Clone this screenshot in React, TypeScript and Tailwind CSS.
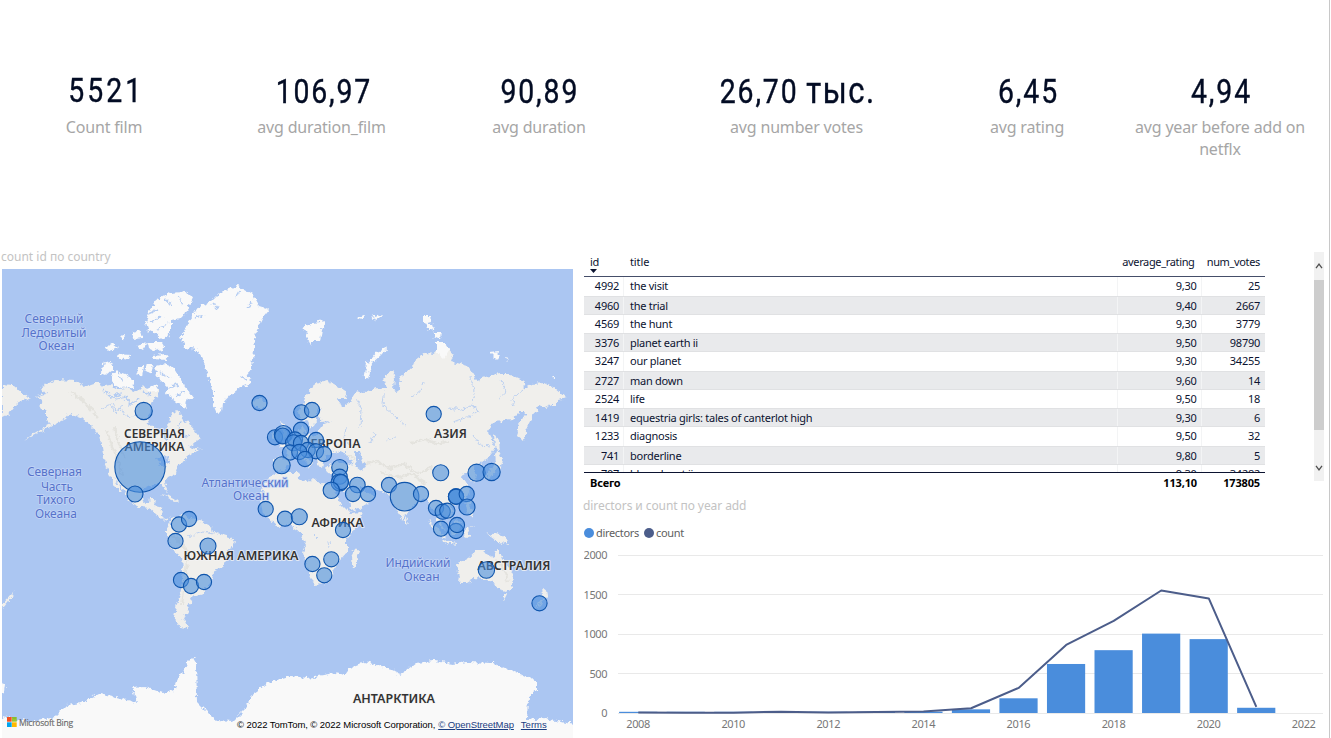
const kpis = [
  { value: '5521', label: 'Count film', box: 'w-[208px]', spacing: 'tracking-[3.6px]', shift: 'pt-0 pl-[4px]' },
  { value: '106,97', label: 'avg duration_film', box: 'w-[227px]', spacing: 'tracking-[2.1px]', shift: 'pt-px pl-[4px]' },
  { value: '90,89', label: 'avg duration', box: 'w-[208px]', spacing: 'tracking-[2.2px]', shift: 'pt-px pl-[2px]' },
  { value: '26,70', unit: 'тыс.', label: 'avg number votes', box: 'w-[307px]', spacing: 'tracking-[2.2px]', shift: 'pt-px pl-[2px]' },
  { value: '6,45', label: 'avg rating', box: 'w-[154px]', spacing: 'tracking-[2.2px]', shift: 'pt-px pl-[2px]' },
  { value: '4,94', label: 'avg year before add on netflx', box: 'ml-[20px] w-[192px]', spacing: 'tracking-[2.2px]', shift: 'pt-px pl-[2px]' },
];

const rows = [
  ['4992', 'the visit', '9,30', '25'],
  ['4960', 'the trial', '9,40', '2667'],
  ['4569', 'the hunt', '9,30', '3779'],
  ['3376', 'planet earth ii', '9,50', '98790'],
  ['3247', 'our planet', '9,30', '34255'],
  ['2727', 'man down', '9,60', '14'],
  ['2524', 'life', '9,50', '18'],
  ['1419', 'equestria girls: tales of canterlot high', '9,30', '6'],
  ['1233', 'diagnosis', '9,50', '32'],
  ['741', 'borderline', '9,80', '5'],
  ['707', 'blue planet ii', '9,30', '34282'],
];

const bubbles: number[][] = [
  [143.7, 411, 8.6], [140, 467, 25.2], [135, 494, 8], [259.5, 403], [179, 524.5], [189, 519], [175.5, 541], [208, 546, 8],
  [181, 580], [191, 586], [204, 582], [301.3, 412.3], [312, 410], [301, 429.7], [275, 437.3], [283.3, 434.5, 9],
  [282.7, 436, 8], [295, 439.5], [293.5, 442.7, 8], [301, 443], [316, 440], [307.7, 450], [316, 451.3], [324, 454], [290, 452.5],
  [299.3, 452], [305, 459], [281.7, 465.3, 8.5], [339.7, 467.5, 8], [339.7, 476.7], [339.6, 482.5, 8.5], [341, 482],
  [331.3, 490.3, 8.2], [357.4, 485, 7.8], [353, 494], [368, 494], [389, 485], [404.6, 496.7, 14.3], [421, 494],
  [433.7, 414], [440.7, 472.7, 8], [476.6, 472.7, 8.6], [491.6, 472, 8.6], [456, 496.5], [456, 496.5], [456, 496.7],
  [466.7, 494], [467, 507, 8], [436, 508], [442.7, 511.7], [447.3, 510.7], [441, 528.7], [456, 531], [457, 525],
  [265.7, 509], [285, 518.7], [299.3, 516.7, 8], [343, 530], [331.3, 559.3], [312.4, 564], [324.3, 575.3],
  [486.4, 570, 8.2], [539.5, 603.3],
];

const land = [
  // Alaska, Canada, USA, Central America
  'M42 400 37 396 46 394 41 387 55 380 75 381 85 387 97 383 104 386 110 385 118 389 125 388 137 392 143 386 150 389 157 386 160 391 156 397 151 403 150 413 146 418 148 424 156 428 163 433 165 441 169 438 167 428 170 422 172 412 177 411 182 415 185 423 189 421 193 429 201 439 193 444 188 447 196 449 201 448 192 454 187 457 183 462 178 467 176 473 168 477 164 483 168 492 164 489 161 484 152 484 144 488 142 496 143 503 149 502 150 498 155 498 154 506 162 508 161 515 165 519 171 518 163 521 157 515 149 508 140 507 130 502 124 491 118 482 113 474 120 487 122 493 115 486 109 473 103 458 102 445 100 435 90 425 82 418 70 413 66 418 58 422 50 427 40 432 24 441 36 432 51 424 46 419 46 412 40 408z',
  // South America
  'M171 518 182 515 197 520 212 527 213 532 230 537 234 543 227 553 223 567 213 572 212 582 203 593 197 595 190 598 192 603 187 607 189 613 183 617 188 628 180 627 174 618 177 603 181 590 183 570 182 557 173 550 167 538 167 529z',
  // Eurasia
  'M305 398 312 387 318 383 327 380 335 384 347 392 346 399 337 399 342 407 349 403 352 398 356 391 364 393 378 387 387 389 384 378 392 369 395 378 394 390 398 392 400 383 399 377 412 368 415 360 425 353 435 354 439 346 448 347 453 353 450 361 468 366 474 375 476 380 485 377 500 374 510 374 523 380 525 388 532 384 545 383 555 388 567 398 558 400 558 405 551 405 545 408 538 406 534 414 528 425 523 441 517 436 519 424 526 413 518 413 512 420 495 422 488 431 493 440 495 449 488 458 479 464 473 468 477 478 471 482 467 472 461 475 466 482 470 490 466 499 460 503 450 506 454 513 450 519 443 514 440 509 439 519 445 530 439 524 435 510 430 508 428 500 423 498 417 503 407 512 403 520 398 513 392 500 387 493 377 490 366 489 360 485 362 490 369 492 374 497 367 505 351 511 345 500 337 487 340 475 328 474 324 468 336 462 347 464 354 463 347 458 341 451 334 453 328 457 324 459 322 468 317 465 316 458 307 449 305 455 313 464 309 469 306 462 298 453 292 455 289 463 283 471 274 470 274 458 286 457 287 450 279 445 289 440 297 435 302 425 305 433 315 437 319 430 323 424 331 421 321 422 318 416 322 407 316 410 316 421 312 429 308 421 300 419 298 411 303 405z',
  // Africa
  'M273 475 290 472 298 472 299 478 307 482 313 479 320 484 333 485 340 503 350 513 363 512 358 524 347 540 347 552 336 565 332 577 325 584 315 585 308 570 303 553 306 545 298 530 290 525 277 526 263 513 260 500 265 483z',
  // Madagascar, Sri Lanka
  'M359 551 355 549 351 557 352 569 356 567z', 'M405 517 408 521 405 524z',
  // Southeast Asian islands, New Guinea
  'M428 519 434 525 446 537 443 539 434 531z', 'M443 540 458 543 458 545 444 543z', 'M449 526 457 519 462 524 458 534 451 534z',
  'M465 528 475 526 468 529 471 537 466 539 464 535z', 'M484 532 491 536 498 532 507 539 509 545 496 541z', 'M464 497 471 503 474 518 468 515z',
  // Australia, Tasmania, New Zealand
  'M456 565 468 558 477 550 486 550 485 554 493 559 497 548 502 559 513 573 512 586 506 592 497 589 493 582 487 580 475 578 467 583 459 583 460 577z',
  'M502 595 507 595 504 601z', 'M542 587 549 593 546 597 540 605 534 610 543 598z', 'M2 605 11 595 16 590 8 602 3 608z',
  // Japan, Sakhalin
  'M498 451 502 459 500 467 492 476 483 479 490 471 496 461 495 455z', 'M494 434 499 440 500 452 495 447z',
  // Britain, Ireland, Iceland
  'M279 421 285 425 288 437 279 440 283 433z', 'M273 432 279 432 277 439 271 439z', 'M252 402 258 398 267 401 264 408 255 408z',
  // Cuba and Hispaniola
  'M160 494 170 496 180 502 172 500z',
  // Far-east tip at the left edge
  'M2 384 13 385 22 393 31 397 23 401 17 404 10 413 2 417z',
];

const ice = [
  'M200 306 190 320 180 337 185 348 197 350 204 362 208 377 213 390 213 403 217 413 222 412 223 403 230 395 240 388 252 383 247 374 252 368 254 350 256 330 262 318 269 309 259 306 253 295 237 286 220 293 211 302z',
  'M145 320 150 309 157 300 170 293 182 292 194 297 190 306 181 318 171 320 171 330 165 340 155 334 148 330z',
  'M155 366 166 364 173 367 179 377 185 386 193 397 185 402 187 408 177 403 171 398 169 388 159 379z',
  'M111 377 116 371 125 374 133 380 134 387 120 388 113 384z', 'M102 363 109 361 114 368 106 375 101 373z',
  'M105 348 112 343 118 348 110 351z', 'M119 354 130 355 129 360 118 358z', 'M120 337 125 334 124 341z', 'M132 333 141 331 143 338 134 339z', 'M136 346 148 343 143 350z', 'M148 343 162 343 165 348 155 351 149 348z', 'M151 355 167 354 166 360 152 359z',
  'M138 366 144 366 142 377 137 373z', 'M147 364 152 364 150 374 145 371z', 'M147 388 156 384 158 390 149 393z', 'M165 390 171 390 170 397z',
  'M303 327 313 323 326 321 322 330 320 341 313 341 311 347 307 335z', 'M356 318 365 314 363 320z', 'M371 317 382 314 377 321z',
  'M364 380 367 364 377 352 388 347 381 355 372 363 368 379z', 'M424 315 430 315 431 322 424 324z', 'M426 324 433 324 434 330 428 331z', 'M434 332 441 332 440 339 434 336z',
  'M437 342 444 342 451 350 444 359 437 353z', 'M490 353 499 352 497 360z', 'M505 356 509 357 507 360z', 'M552 376 556 377 553 379z',
  'M2 717 33 722 55 717 67 705 81 703 100 693 123 699 137 703 133 688 145 687 163 693 175 690 178 677 183 672 187 663 193 657 196 662 197 702 208 713 217 720 233 721 247 707 253 693 267 683 290 676 308 678 335 673 345 675 350 668 365 662 382 667 395 670 398 676 415 663 435 661 452 664 468 662 492 663 518 673 537 682 537 690 528 697 527 720 545 718 560 722 576 724 576 742 -2 742z',
  'M0 682 5 684 4 692 0 694z',
];

const lakes = [
  'M326 457 331 453 337 455 345 453 348 458 341 459 330 462z', 'M354 451 359 451 360 457 365 466 362 471 356 466 358 460z',
  'M156 458 164 456 171 460 165 466 160 464z', 'M334 483 344 488 351 505 349 508 339 492z',
];

// Inlets and sounds that break up the arctic islands
const inlets =
  'M150 322 162 316M158 330 168 323M165 298 172 306M178 296 183 305M148 314 157 310M160 372 170 378M168 388 178 385M176 396 184 392M119 375 123 382M247 380 240 377M203 315 195 318M240 291 236 298M252 302 247 308M213 303 218 309M104 391 112 397 121 394M112 402 117 410M124 396 131 404 140 398M150 395 142 391M181 421 178 430M190 434 182 438';
const rivers =
  'M357 398 361 410 360 427M384 395 383 405 397 418 407 427M423 382 420 391 412 397M470 377 475 391 471 405 478 410 470 416 454 422M500 380 506 389 500 400M523 390 512 399 514 405M448 408 462 410 471 406 479 411M473 435 480 445 490 446M101 410 110 404 116 413 122 405M108 394 116 399 128 397M119 407 125 415 135 416M188 537 203 532 214 534M346 428 344 439 354 447M375 433 371 443M386 440 395 438M313 533 320 540M329 541 330 548';
const relief =
  'M360 465 375 461 390 468 404 464 419 474 433 466M380 472 397 477 412 474 425 483M107 430 112 446 118 460 122 476M114 428 119 445 126 458M173 535 187 551 186 577 182 605M345 456 355 458M411 443 425 439 437 444 449 441M496 560 505 570 508 582M70 392 83 400 98 417';

type MapLabel = { x: number; y: number; text: string; w?: number };
const oceans: MapLabel[] = [
  { x: 54, y: 323, text: 'Северный', w: 59 }, { x: 54, y: 336.5, text: 'Ледовитый', w: 65 }, { x: 56.5, y: 350, text: 'Океан', w: 36 },
  { x: 54.5, y: 476, text: 'Северная', w: 55 }, { x: 57, y: 490.5, text: 'Часть', w: 32 }, { x: 56, y: 504, text: 'Тихого', w: 39 }, { x: 56, y: 518, text: 'Океана', w: 42 },
  { x: 245, y: 487, text: 'Атлантический', w: 87 }, { x: 251, y: 500, text: 'Океан', w: 36 },
  { x: 418, y: 566.5, text: 'Индийский', w: 65 }, { x: 421.5, y: 580.5, text: 'Океан', w: 36 },
];
const continents: MapLabel[] = [
  { x: 154.5, y: 438, text: 'СЕВЕРНАЯ', w: 61 }, { x: 154.5, y: 451, text: 'АМЕРИКА', w: 60 }, { x: 241, y: 560, text: 'ЮЖНАЯ АМЕРИКА', w: 115 },
  { x: 335.5, y: 447.5, text: 'ЕВРОПА', w: 50 }, { x: 450.5, y: 437.5, text: 'АЗИЯ', w: 33 }, { x: 337.5, y: 527, text: 'АФРИКА', w: 52 },
  { x: 514, y: 570, text: 'АВСТРАЛИЯ', w: 73 }, { x: 394, y: 703, text: 'АНТАРКТИКА', w: 82 },
];

function WorldMap() {
  return (
    <svg className="block h-[469px] w-[571px]" viewBox="2 269 571 469">
      <defs>
        <filter id="coast" x="-5%" y="-5%" width="110%" height="110%">
          <feTurbulence type="fractalNoise" baseFrequency="0.22" numOctaves="3" seed="4" />
          <feDisplacementMap in="SourceGraphic" scale="6.5" xChannelSelector="R" yChannelSelector="G" />
          <feGaussianBlur stdDeviation="0.5" />
        </filter>
      </defs>
      <rect x="2" y="269" width="571" height="469" fill="#abc6f2" />
      <g filter="url(#coast)">
        {land.map((d) => <path key={d} d={d} fill="#f0efec" />)}
        <path d={relief} fill="none" stroke="#e4e3de" strokeWidth="2.2" />
        <path d={rivers} fill="none" stroke="#b7cdf0" strokeWidth="0.9" />
        {lakes.map((d) => <path key={d} d={d} fill="#abc6f2" />)}
        {ice.map((d) => <path key={d} d={d} fill="#f9f9f9" />)}
        <path d={inlets} fill="none" stroke="#b4ccf2" strokeWidth="1.4" />
      </g>
      <g fontFamily="'Noto Sans','Open Sans',sans-serif" textAnchor="middle">
        <g fontSize="12" fill="#5673cb" stroke="#c3d5f6" strokeWidth="1.6" strokeLinejoin="round" paintOrder="stroke">
          {oceans.map((l, i) => <text key={i} x={l.x} y={l.y} textLength={l.w}>{l.text}</text>)}
        </g>
        <g fontSize="12" fontWeight="600" fill="#333333" stroke="#f4f4f4" strokeOpacity="0.75" strokeWidth="1.8" strokeLinejoin="round" paintOrder="stroke">
          {continents.map((l, i) => <text key={i} x={l.x} y={l.y} textLength={l.w} lengthAdjust="spacingAndGlyphs">{l.text}</text>)}
        </g>
      </g>
      <g fill="#4a8ddc" fillOpacity="0.6" stroke="#0f55ac" strokeWidth="1.1">
        {bubbles.map(([x, y, r], i) => <circle key={i} cx={x} cy={y} r={r ?? 7.6} />)}
      </g>
      <path fill="#f25022" d="M7 717h4.7v4.7H7z" /><path fill="#7fba00" fillOpacity=".8" d="M12 717h4.7v4.7H12z" />
      <path fill="#00a4ef" d="M7 722.3h4.7v4.7H7z" /><path fill="#ffb900" d="M12 722.3h4.7v4.7H12z" />
      <text x="19" y="725.5" fontFamily="'Open Sans',sans-serif" fontSize="8.5" fill="#6b6b6b" stroke="#6b6b6b" strokeWidth="0.15" textLength="54">Microsoft Bing</text>
    </svg>
  );
}

const bars = [2, 2, 1, 8, 2, 8, 16, 45, 185, 620, 795, 1005, 935, 65];
const line = [3, 2, 2, 13, 3, 10, 15, 58, 315, 860, 1165, 1550, 1450, 75];
const chartX = (i: number) => 54.3 + i * 47.54;
const chartY = (v: number) => 163.3 - v * 0.0789;
const barTop = (v: number) => Math.min(chartY(v) - 0.4, 161.8);

function Chart() {
  return (
    <svg className="block h-[188px] w-[745px]" viewBox="0 0 745 188" fontFamily="'Noto Sans','Open Sans',sans-serif" fontSize="11" fill="#777777">
      {[0, 500, 1000, 1500, 2000].map((v) => (
        <g key={v}>
          <path d={`M34 ${Math.floor(chartY(v)) + 0.5}H739`} stroke="#e9e9e9" />
          <text x="23.5" y={chartY(v) + 3.8} textAnchor="end" textLength={v === 0 ? 6 : v === 500 ? 18 : 24}>{v}</text>
        </g>
      ))}
      {bars.map((v, i) => (
        <rect key={i} x={chartX(i) - 19.2} y={barTop(v)} width="38.2" height={163 - barTop(v)} fill="#4a8ddc" />
      ))}
      <polyline points={line.map((v, i) => `${chartX(i)},${chartY(v) - 0.5}`).join(' ')} fill="none" stroke="#4c5d8a" strokeWidth="2" strokeLinejoin="round" />
      {[2008, 2010, 2012, 2014, 2016, 2018, 2020, 2022].map((y, i) => (
        <text key={y} x={chartX(i * 2)} y="178.3" textAnchor="middle" textLength="24">{y}</text>
      ))}
    </svg>
  );
}

const cols = 'grid grid-cols-[40px_494px_84px_63px]';

export default function App() {
  return (
    <main className="flex h-[738px] w-[1330px] flex-col overflow-hidden border-r border-[#c8c8c8] bg-white font-['Noto_Sans','Open_Sans',sans-serif] text-[#0b1330]">
      <section className="flex h-[248px] pt-[72px]">
        {kpis.map((k) => (
          <div key={k.label} className={`${k.box} flex shrink-0 flex-col items-center`}>
            <div className={`h-[44px] ${k.shift}`}>
              <div className={`${k.spacing} scale-x-[0.86] whitespace-nowrap font-['Roboto',sans-serif] text-[33px] leading-[38px] text-[#030c24] [-webkit-text-stroke:0.4px_#030c24]`}>
                {k.value}
                {k.unit && <span className="ml-[9px] text-[36px] leading-[30px] tracking-[1.8px]">{k.unit}</span>}
              </div>
            </div>
            <div className="text-center text-[16px] leading-[22px] tracking-[-0.18px] text-[#a6a6a6]">{k.label}</div>
          </div>
        ))}
      </section>

      <section className="flex h-[490px]">
        <div className="w-[584px] shrink-0 pl-[2px]">
          <h2 className="-ml-px h-[21px] text-[12px] leading-[18px] text-[#c3c3c3]">count id по country</h2>
          <div className="relative h-[469px] w-[571px] overflow-hidden">
            <WorldMap />
            <div className="absolute top-[450px] left-[235px] flex whitespace-nowrap font-['Liberation_Sans',sans-serif] text-[9.5px] leading-[12px] text-black">
              <span className="tracking-[-0.07px]">© 2022 TomTom, © 2022 Microsoft Corporation,</span>
              <a className="ml-[3px] tracking-[-0.07px] text-[#1a3d82] underline">© OpenStreetMap</a>
              <a className="ml-[7px] text-[#1a3d82] underline">Terms</a>
            </div>
          </div>
        </div>

        <div className="flex w-[745px] shrink-0 flex-col">
          <div className="flex h-[247px] justify-between pt-[4px]">
            <div className="w-[681px] text-[11px]">
              <div className={`${cols} relative h-[25px] border-b border-[#454e69] leading-[20px] tracking-[-0.35px]`}>
                <span className="pl-[6px]">id</span>
                <span className="pl-[6px] tracking-[-0.1px]">title</span>
                <span className="pr-[7.5px] text-right">average_rating</span>
                <span className="pr-[5px] text-right">num_votes</span>
                <svg className="absolute top-[17px] left-[6px]" width="7" height="4" viewBox="0 0 7 4"><path d="M0 0h7L3.5 4z" fill="#0b1330" /></svg>
              </div>
              <div className="h-[195px] overflow-hidden">
                {rows.map(([id, title, rating, votes], i) => (
                  <div key={id} className={`${cols} h-[18.75px] tracking-[-0.26px] ${i % 2 ? 'border-y border-[#e0e1e3] bg-[#e9eaec] leading-[17px]' : 'leading-[18.6px]'}`}>
                    <span className="border-r border-[#f3f4f5] pr-[4px] text-right">{id}</span>
                    <span className="border-r border-[#f3f4f5] pl-[6px]">{title}</span>
                    <span className="border-r border-[#f3f4f5] pr-[4.5px] text-right">{rating}</span>
                    <span className="pr-[5px] text-right">{votes}</span>
                  </div>
                ))}
              </div>
              <div className={`${cols} border-t border-[#0b1330] text-[11px] leading-[20px] font-bold tracking-[-0.15px] text-black`}>
                <span className="pl-[6px]">Всего</span>
                <span />
                <span className="pr-[5px] text-right">113,10</span>
                <span className="pr-[5px] text-right">173805</span>
              </div>
            </div>
            <div className="mr-[5px] flex h-[229px] w-[10px] flex-col items-center bg-[#f1f1f1]">
              <svg className="h-[28px] w-[8px]" viewBox="0 0 8 28"><path d="M1 16.2 4 12.2l3 4" fill="none" stroke="#505050" strokeWidth="1.3" /></svg>
              <div className="h-[150px] w-full bg-[#cdcdcd]" />
              <svg className="mt-[23px] h-[28px] w-[8px]" viewBox="0 0 8 28"><path d="m1 12.8 3 4 3-4" fill="none" stroke="#505050" strokeWidth="1.3" /></svg>
            </div>
          </div>
          <h2 className="-ml-px h-[29px] pt-[2px] text-[12px] leading-[18px] tracking-[-0.08px] text-[#c3c3c3]">directors и count по year add</h2>
          <div className="flex h-[26px] items-start text-[11px] leading-[18px] tracking-[-0.32px] text-[#606060]">
            <span className="mt-[3.5px] mr-[2px] size-[10px] rounded-full bg-[#4a8ddc]" />directors
            <span className="mt-[3.5px] mr-[2px] ml-[5px] size-[10px] rounded-full bg-[#4c5d8a]" />count
          </div>
          <Chart />
        </div>
      </section>
    </main>
  );
}
